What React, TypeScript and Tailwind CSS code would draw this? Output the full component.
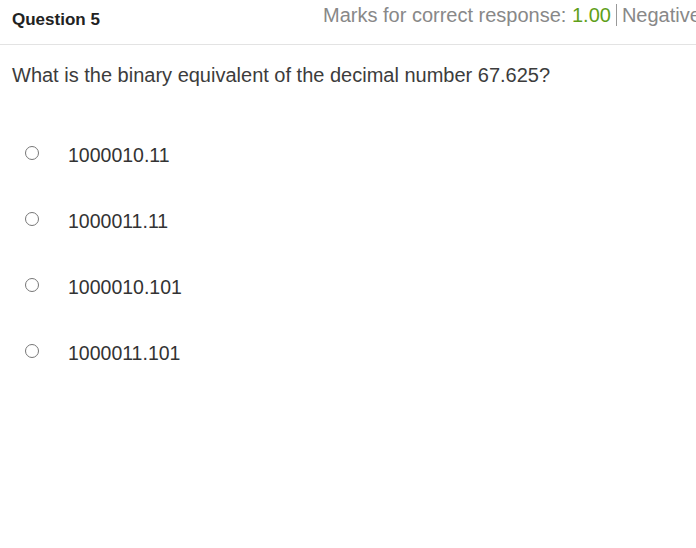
import React from 'react';

const options = ['1000010.11', '1000011.11', '1000010.101', '1000011.101'];

export default function App() {
  return (
    <div className="w-[696px] h-[548px] overflow-hidden bg-white font-['Liberation_Sans',Arial,sans-serif]">
      <div className="flex h-[45px] items-start overflow-hidden border-b border-[#e3e3e3] pl-3">
        <h3 className="mt-[7px] w-[311px] shrink-0 text-[17px] font-bold text-[#222]">Question 5</h3>
        <div className="flex shrink-0 items-center whitespace-nowrap text-[20px] text-[#888]">
          <span>Marks for correct response:&nbsp;</span>
          <span className="text-[#5fa01a]">1.00</span>
          <span className="mx-[5px] h-[22px] w-px bg-[#999]" />
          <span>Negative Marks: 0.00</span>
        </div>
      </div>

      <p className="ml-3 mt-[15px] text-[20px] text-[#3c3c3c]">
        What is the binary equivalent of the decimal number 67.625?
      </p>

      <ul className="mt-[33px]">
        {options.map((opt) => (
          <li key={opt} className="flex h-[66px] items-center">
            <span className="ml-[25px] -mt-[6px] h-[14px] w-[14px] rounded-full border border-[#777]" />
            <span className="ml-[29px] text-[19.5px] text-[#333]">{opt}</span>
          </li>
        ))}
      </ul>
    </div>
  );
}
